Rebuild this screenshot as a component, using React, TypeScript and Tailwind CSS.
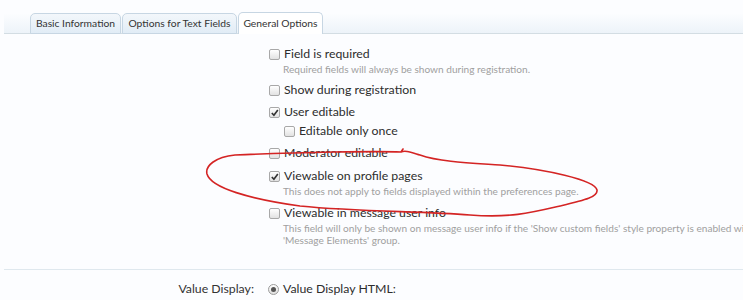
import React from "react";

const font = { fontFamily: "Lato, 'Open Sans', sans-serif" };

function Check({ checked }: { checked?: boolean }) {
  return (
    <span className="relative inline-block w-[11px] h-[11px] shrink-0 border border-[#a8a8a8] rounded-[2px] bg-gradient-to-b from-[#ffffff] to-[#e2e2e2]">
      {checked && (
        <svg viewBox="0 0 11 11" className="absolute left-0 top-0 w-[10px] h-[10px]">
          <path d="M2 5.5 L4.3 8 L8.6 2.2" fill="none" stroke="#333" strokeWidth="1.8" />
        </svg>
      )}
    </span>
  );
}

function Radio() {
  return (
    <span className="relative inline-flex items-center justify-center w-[11px] h-[11px] shrink-0 border border-[#9c9c9c] rounded-full bg-gradient-to-b from-[#ffffff] to-[#dedede]">
      <span className="w-[5px] h-[5px] rounded-full bg-[#555]" />
    </span>
  );
}

function Option({
  label,
  checked,
  desc,
  className,
  indent,
}: {
  label: string;
  checked?: boolean;
  desc?: string[];
  className?: string;
  indent?: boolean;
}) {
  return (
    <div className={className}>
      <div className={`flex items-center h-[18px] gap-[4px] ${indent ? "pl-[15px]" : ""}`}>
        <Check checked={checked} />
        <span className="text-[12.3px] leading-[18px] text-[#2d2d2d] whitespace-nowrap">{label}</span>
      </div>
      {desc && (
        <div className="pl-[14px] text-[10.1px] leading-[12px] text-[#a0a0a0]">
          {desc.map((d) => (
            <div key={d} className="whitespace-nowrap">{d}</div>
          ))}
        </div>
      )}
    </div>
  );
}

export default function App() {
  return (
    <div className="relative w-[743px] h-[300px] overflow-hidden bg-[#fcfdff]" style={font}>
      {/* Tab bar */}
      <div className="ml-[4px] h-[34px] flex items-end pl-[26px] gap-[1px] border-b border-[#d3dde3] bg-gradient-to-b from-[#fcfdff] from-40% to-[#edf3f9]">
        <div className="-mb-px w-[91px] h-[21px] flex items-center justify-center rounded-t-[5px] border border-[#c7d6e3] bg-gradient-to-b from-[#f3f7fb] to-[#e1ecf6] text-[10.3px] text-[#333] whitespace-nowrap">
          Basic Information
        </div>
        <div className="-mb-px w-[115px] h-[21px] flex items-center justify-center rounded-t-[5px] border border-[#c7d6e3] bg-gradient-to-b from-[#f3f7fb] to-[#e1ecf6] text-[10.3px] text-[#333] whitespace-nowrap">
          Options for Text Fields
        </div>
        <div className="-mb-px w-[85px] h-[22px] flex items-center justify-center rounded-t-[5px] border border-b-0 border-[#c7d6e3] bg-white text-[10.3px] text-[#333] whitespace-nowrap">
          General Options
        </div>
      </div>

      {/* Options */}
      <div className="pl-[269px] pt-[11px]">
        <Option label="Field is required" desc={["Required fields will always be shown during registration."]} />
        <Option className="mt-[6px]" label="Show during registration" />
        <Option className="mt-[4px]" label="User editable" checked />
        <Option className="mt-[1px]" label="Editable only once" indent />
        <Option className="mt-[4px]" label="Moderator editable" />
        <Option
          className="mt-[5px]"
          label="Viewable on profile pages"
          checked
          desc={["This does not apply to fields displayed within the preferences page."]}
        />
        <Option
          className="mt-[7px]"
          label="Viewable in message user info"
          desc={[
            "This field will only be shown on message user info if the 'Show custom fields' style property is enabled within the",
            "'Message Elements' group.",
          ]}
        />
      </div>

      <div className="ml-[4px] mt-[23px] border-t border-[#dfe8ee]" />

      <div className="flex items-center mt-[10px] h-[18px]">
        <div className="w-[254px] text-right text-[12.3px] text-[#333]">Value Display:</div>
        <div className="ml-[14px] flex items-center gap-[4px]">
          <Radio />
          <span className="text-[12.3px] text-[#2d2d2d]">Value Display HTML:</span>
        </div>
      </div>

      {/* hand-drawn red annotation */}
      <svg className="absolute left-0 top-0 pointer-events-none" width="743" height="300" viewBox="0 0 743 300">
        <path
          d="M403 149 L401 152 C380 151 300 152 235 155 C215 157 205 166 207 174 C211 188 250 199 300 206 C360 212 420 211 470 215 C510 218 530 213 560 206 C585 200 598 197 597 190 C595 180 545 169 500 165 C470 163 440 162 420 155 C410 152 405 150 401 152"
          fill="none"
          stroke="#d42424"
          strokeWidth="1.6"
          strokeLinecap="round"
          strokeLinejoin="round"
        />
      </svg>
    </div>
  );
}
